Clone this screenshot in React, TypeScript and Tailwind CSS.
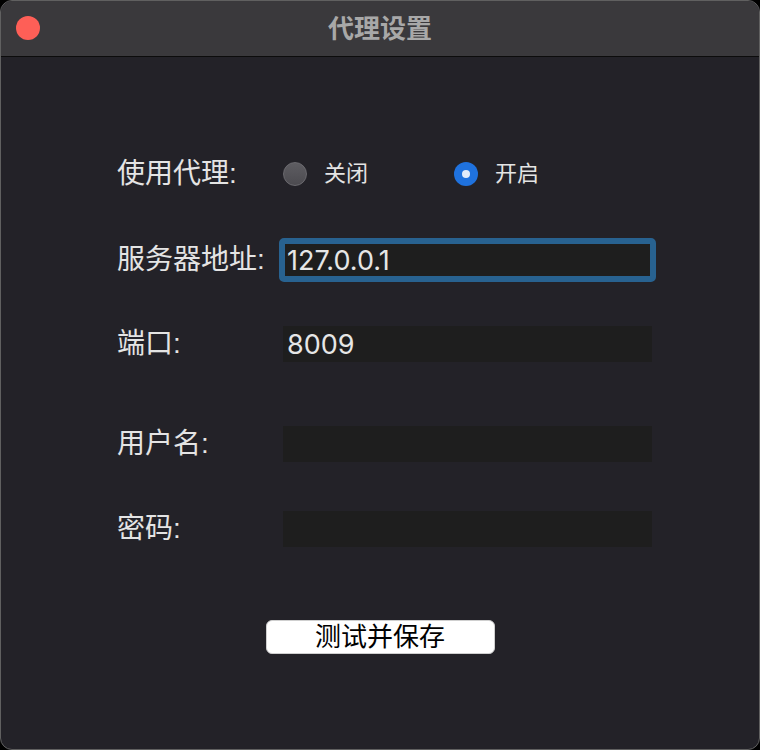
import React from "react";

const FONT = { fontFamily: "'Liberation Sans','Noto Sans CJK SC',sans-serif" };
const NUM = { fontFamily: "Inter,'Liberation Sans',sans-serif" };

function Label({ children }: { children: React.ReactNode }) {
  return (
    <div className="w-[166px] shrink-0 text-[28px] leading-none text-[#e4e4e4]">{children}</div>
  );
}

function Field({ value }: { value?: string }) {
  return (
    <div
      className="flex h-[36px] w-[369px] items-center bg-[#1e1e1e] pl-[4px] text-[27px] leading-none text-[#e6e6e6]"
      style={NUM}
    >
      {value}
    </div>
  );
}

export default function App() {
  return (
    <div className="h-[750px] w-[760px] bg-black" style={FONT}>
      <div className="flex h-[750px] w-[760px] flex-col overflow-hidden rounded-[12px] border border-[#606060] bg-[#232228]">
        <div className="relative flex h-[56px] shrink-0 items-center justify-center border-b border-[#0c0c0c] bg-[#3a393c]">
          <div className="absolute left-[15px] top-[15px] h-[24px] w-[24px] rounded-full bg-[#fe5f57]" />
          <div className="text-[26px] font-bold leading-none text-[#a8a8a8]">代理设置</div>
        </div>
        <div className="flex flex-col pl-[116px]">
          <div className="mt-[103px] flex h-[28px] items-center">
            <Label>使用代理:</Label>
            <div className="flex items-center">
              <div className="h-[24px] w-[24px] rounded-full border border-[#6a696e] bg-gradient-to-b from-[#5e5d62] to-[#4c4b50]" />
              <span className="ml-[17px] text-[22px] leading-none text-[#e4e4e4]">关闭</span>
            </div>
            <div className="ml-[86px] flex items-center">
              <div className="flex h-[24px] w-[24px] items-center justify-center rounded-full bg-[#1f72de]">
                <div className="h-[8px] w-[8px] rounded-full bg-[#e2ecfa]" />
              </div>
              <span className="ml-[17px] text-[22px] leading-none text-[#e4e4e4]">开启</span>
            </div>
          </div>
          <div className="mt-[50px] flex h-[44px] items-center">
            <Label>服务器地址:</Label>
            <div
              className="ml-[-4px] flex h-[44px] w-[377px] items-center rounded-[5px] border-[6px] border-[#286290] bg-[#1e1e1e] pl-[2px] text-[27px] leading-none text-[#e6e6e6]"
              style={NUM}
            >
              127.0.0.1
            </div>
          </div>
          <div className="mt-[44px] flex h-[36px] items-center">
            <Label>端口:</Label>
            <Field value="8009" />
          </div>
          <div className="mt-[64px] flex h-[36px] items-center">
            <Label>用户名:</Label>
            <Field />
          </div>
          <div className="mt-[49px] flex h-[36px] items-center">
            <Label>密码:</Label>
            <Field />
          </div>
        </div>
        <div className="mt-[73px] flex justify-center">
          <div className="flex h-[34px] w-[229px] items-center justify-center rounded-[6px] border border-[#cfcfcf] bg-white text-[26px] leading-none text-black">
            测试并保存
          </div>
        </div>
      </div>
    </div>
  );
}
